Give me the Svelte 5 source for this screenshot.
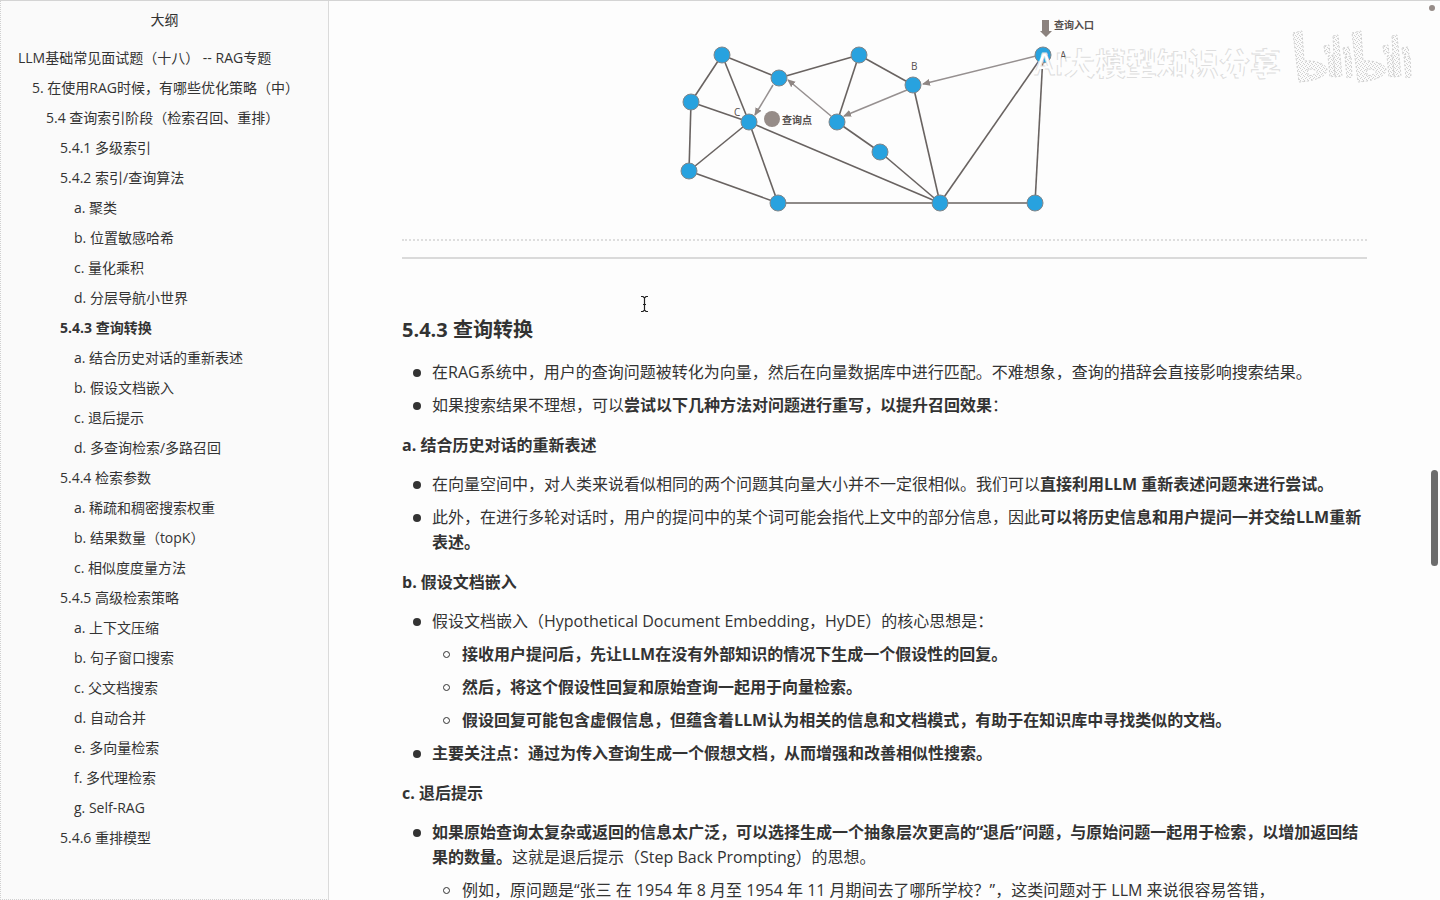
<script>
  const outline = [
    [0, 'LLM基础常见面试题（十八） -- RAG专题'],
    [1, '5. 在使用RAG时候，有哪些优化策略（中）'],
    [2, '5.4 查询索引阶段（检索召回、重排）'],
    [3, '5.4.1 多级索引'],
    [3, '5.4.2 索引/查询算法'],
    [4, 'a. 聚类'],
    [4, 'b. 位置敏感哈希'],
    [4, 'c. 量化乘积'],
    [4, 'd. 分层导航小世界'],
    [3, '5.4.3 查询转换', true],
    [4, 'a. 结合历史对话的重新表述'],
    [4, 'b. 假设文档嵌入'],
    [4, 'c. 退后提示'],
    [4, 'd. 多查询检索/多路召回'],
    [3, '5.4.4 检索参数'],
    [4, 'a. 稀疏和稠密搜索权重'],
    [4, 'b. 结果数量（topK）'],
    [4, 'c. 相似度度量方法'],
    [3, '5.4.5 高级检索策略'],
    [4, 'a. 上下文压缩'],
    [4, 'b. 句子窗口搜索'],
    [4, 'c. 父文档搜索'],
    [4, 'd. 自动合并'],
    [4, 'e. 多向量检索'],
    [4, 'f. 多代理检索'],
    [4, 'g. Self-RAG'],
    [3, '5.4.6 重排模型'],
  ];

  const nodes = [
    [722, 55], [779, 78], [859, 55], [913, 85], [1043, 55], [691, 102], [749, 122],
    [837, 122], [880, 152], [689, 171], [778, 203], [940, 203], [1035, 203],
  ];
  const edges = [
    [0, 1], [0, 5], [0, 6], [1, 2], [2, 3], [2, 7], [5, 6], [5, 9], [6, 9], [6, 10],
    [6, 11], [7, 8], [8, 11], [3, 11], [9, 10], [10, 11], [11, 12], [4, 11], [4, 12],
  ];
  const arrows = [
    [1036, 56, 923, 84], [907, 90, 844, 116], [831, 116, 788, 80], [773, 85, 755, 115],
  ];
</script>

<div class="page" lang="zh-CN">
  <aside>
    <h2>大纲</h2>
    <nav aria-label="大纲">
      {#each outline as [level, label, active]}
        <a href="#top" class="l{level}" class:active>{label}</a>
      {/each}
    </nav>
  </aside>

  <main>
    <figure>
      <svg class="graph" viewBox="680 1 420 218" width="420" height="218">
        <defs>
          <marker id="tip" viewBox="0 0 8 8" refX="7" refY="4" markerWidth="8" markerHeight="8" markerUnits="userSpaceOnUse" orient="auto">
            <path d="M0 0.5 8 4 0 7.5Z" fill="#8f8683" />
          </marker>
        </defs>
        {#each edges as [a, b]}
          <line x1={nodes[a][0]} y1={nodes[a][1]} x2={nodes[b][0]} y2={nodes[b][1]} stroke="#696361" stroke-width="1.6" />
        {/each}
        {#each arrows as [x1, y1, x2, y2]}
          <line {x1} {y1} {x2} {y2} stroke="#969090" stroke-width="1.5" marker-end="url(#tip)" />
        {/each}
        {#each nodes as [cx, cy]}
          <circle {cx} {cy} r="8" fill="#28a2df" stroke="#80868a" stroke-width="1" />
        {/each}
        <circle cx="772" cy="119" r="8" fill="#968c88" />
        <path d="M1042 20h7v11h3l-6 6-6-6h2z" fill="#8b827e" />
        <text x="1054" y="29" class="cap">查询入口</text>
        <text x="782" y="124" class="cap">查询点</text>
        <text x="734" y="116" class="cap thin">C</text>
        <text x="911" y="70" class="cap thin">B</text>
        <text x="1060" y="59" class="cap thin">A</text>
      </svg>
    </figure>
    <hr class="faint" />
    <hr />

    <h3>5.4.3 查询转换</h3>
    <ul>
      <li>在RAG系统中，用户的查询问题被转化为向量，然后在向量数据库中进行匹配。不难想象，查询的措辞会直接影响搜索结果。</li>
      <li>如果搜索结果不理想，可以<b>尝试以下几种方法对问题进行重写，以提升召回效果</b>：</li>
    </ul>

    <h4>a. 结合历史对话的重新表述</h4>
    <ul>
      <li>在向量空间中，对人类来说看似相同的两个问题其向量大小并不一定很相似。我们可以<b>直接利用LLM 重新表述问题来进行尝试。</b></li>
      <li>此外，在进行多轮对话时，用户的提问中的某个词可能会指代上文中的部分信息，因此<b>可以将历史信息和用户提问一并交给LLM重新表述。</b></li>
    </ul>

    <h4>b. 假设文档嵌入</h4>
    <ul>
      <li>
        假设文档嵌入（Hypothetical Document Embedding，HyDE）的核心思想是：
        <ul>
          <li><b>接收用户提问后，先让LLM在没有外部知识的情况下生成一个假设性的回复。</b></li>
          <li><b>然后，将这个假设性回复和原始查询一起用于向量检索。</b></li>
          <li><b>假设回复可能包含虚假信息，但蕴含着LLM认为相关的信息和文档模式，有助于在知识库中寻找类似的文档。</b></li>
        </ul>
      </li>
      <li><b>主要关注点：通过为传入查询生成一个假想文档，从而增强和改善相似性搜索。</b></li>
    </ul>

    <h4>c. 退后提示</h4>
    <ul>
      <li>
        <b>如果原始查询太复杂或返回的信息太广泛，可以选择生成一个抽象层次更高的“退后”问题，与原始问题一起用于检索，以增加返回结果的数量。</b>这就是退后提示（Step Back Prompting）的思想。
        <ul>
          <li>例如，原问题是“张三 在 1954 年 8 月至 1954 年 11 月期间去了哪所学校？”，这类问题对于 LLM 来说很容易答错，</li>
        </ul>
      </li>
    </ul>
  </main>

  <svg class="mark" viewBox="1030 20 390 70" width="390" height="70">
    <defs>
      <pattern id="grain" width="4" height="4" patternUnits="userSpaceOnUse">
        <rect width="4" height="4" fill="#fbfbfb" />
        <path d="M0 0h1v1H0zM2 1h1v1H2zM1 2h1v1H1zM3 3h1v1H3z" fill="#d2d2d2" />
      </pattern>
      <g id="pair">
        <path fill-rule="evenodd" d="M1293 33 1302 31 1304 61C1317 60 1327 65 1327 70 1326 77 1314 81 1299 82ZM1308 69v7c5-1 9-2 9-4s-4-3-9-3Z" />
        <path d="M1324 46l5-1 1 8-5 1zM1328 56l5-1 2 21-5 1zM1333 36l5-1 4 41-7 1zM1343 48l6-1 1 7-6 1zM1345 57l6-1 1 21-5 1z" />
      </g>
    </defs>
    <text x="1034" y="75" class="wm">AI大模型知识分享</text>
    <g class="logo">
      <use href="#pair" />
      <use href="#pair" x="59" />
    </g>
  </svg>
  <svg class="cursor" viewBox="0 0 9 18" width="9" height="18">
    <path d="M1 1.500h2l1.500 1.500 1.500-1.500h2M4.500 3v12M3 9.500h3M1 16.500h2l1.500-1.500 1.500 1.500h2" fill="none" stroke="#222" stroke-width="1.200" />
  </svg>
  <span class="dot"></span>
  <span class="thumb"></span>
</div>

<style>
  :global(body) {
    margin: 0;
    overflow: hidden;
  }
  .page {
    position: relative;
    display: flex;
    height: 100vh;
    overflow: hidden;
    box-sizing: border-box;
    border-top: 1px solid #d4d4d4;
    background: #fdfdfd;
    color: #333;
    font-family: 'Open Sans', 'Noto Sans CJK SC', sans-serif;
    font-size: 16px;
    line-height: 25px;
    text-spacing-trim: space-all;
  }
  aside {
    flex: 0 0 329px;
    box-sizing: border-box;
    border: 1px dotted #d0d0d0;
    border-top: 0;
    border-right: 1px solid #dadada;
    background: #fafafa;
    font-size: 14px;
  }
  h2 {
    margin: 4px 0 8px;
    font-size: 14px;
    font-weight: 400;
    line-height: 30px;
    text-align: center;
  }
  nav {
    display: flex;
    flex-direction: column;
  }
  nav a {
    color: inherit;
    text-decoration: none;
    line-height: 30px;
    white-space: nowrap;
  }
  .l0 { padding-left: 17px; }
  .l1 { padding-left: 31px; }
  .l2 { padding-left: 45px; }
  .l3 { padding-left: 59px; }
  .l4 { padding-left: 73px; }
  .active, h3, h4, b { font-weight: 700; }
  main {
    flex: 1;
    min-width: 0;
    padding: 0 73px;
  }
  figure {
    display: flex;
    justify-content: center;
    margin: 0 0 20px;
    padding-left: 10px;
  }
  svg { display: block; }
  .cap {
    font-size: 10px;
    font-weight: 600;
    fill: #554f4d;
  }
  .thin { font-weight: 400; }
  hr {
    margin: 0 0 16px;
    border: 0;
    border-top: 2px solid #dadada;
  }
  .faint { border-top: 2px dotted #dedede; }
  h3 {
    margin: 55px 0 14px;
    font-size: 20px;
    line-height: 32px;
  }
  h4 {
    margin: 15px 0 14px;
    font-size: 16px;
  }
  ul {
    margin: 0;
    padding-left: 30px;
    list-style: none;
  }
  li { position: relative; }
  li + li, li ul { margin-top: 8px; }
  li::before {
    content: '';
    position: absolute;
    left: -19px;
    top: 9px;
    width: 8px;
    height: 8px;
    border-radius: 50%;
    background: #333;
  }
  li li::before {
    width: 5px;
    height: 5px;
    border: 1px solid #333;
    background: none;
  }
  .mark {
    position: absolute;
    top: 19px;
    right: 20px;
  }
  .wm {
    font-size: 31px;
    font-weight: 600;
    fill: #fefefe;
    stroke: #dedede;
    stroke-width: 1;
    stroke-dasharray: 10 5;
  }
  .logo {
    fill: url(#grain);
    stroke: #cfcfcf;
    stroke-width: 1;
    stroke-dasharray: 2 2;
  }
  .cursor {
    position: absolute;
    left: 640px;
    top: 294px;
  }
  .dot {
    position: absolute;
    right: 5px;
    top: 4px;
    width: 6px;
    height: 6px;
    border-radius: 50%;
    background: #968c88;
  }
  .thumb {
    position: absolute;
    right: 2px;
    top: 469px;
    width: 7px;
    height: 96px;
    border-radius: 4px;
    background: #6c6c6c;
  }
</style>
